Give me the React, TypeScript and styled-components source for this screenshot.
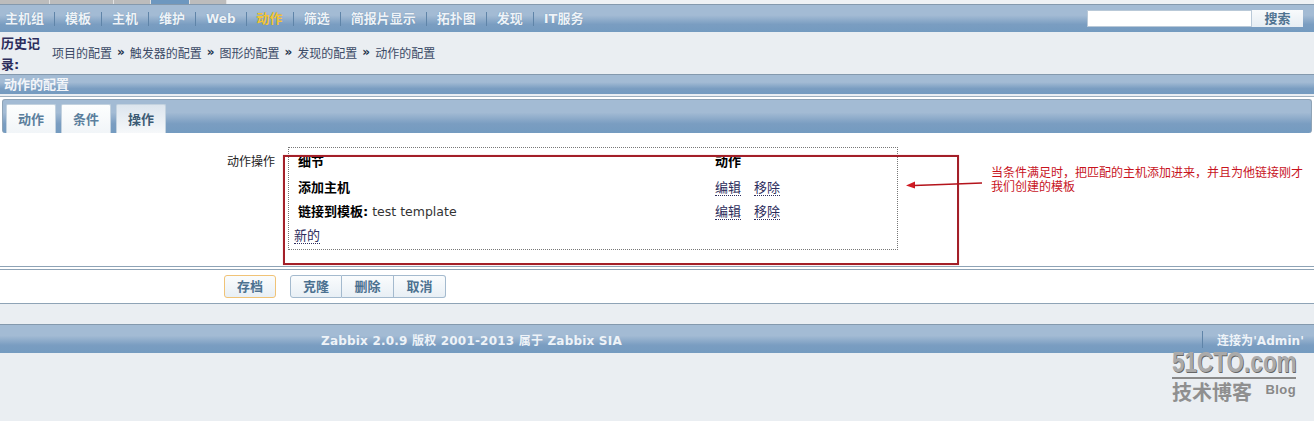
import React from 'react';
import styled, { createGlobalStyle } from 'styled-components';

const CJK = `"DejaVu Sans", "Noto Sans CJK SC", sans-serif`;
const BAR = 'linear-gradient(to bottom, #a3bbd4 0%, #a3bbd4 38%, #7a9dc1 72%, #749bc0 100%)';

const GlobalStyle = createGlobalStyle`
  html, body {
    margin: 0;
    padding: 0;
    background: #eaeef2;
  }
  body {
    font-family: ${CJK};
    font-size: 12px;
    color: #111;
  }
`;

const Page = styled.div`
  position: relative;
  width: 1314px;
  height: 421px;
  overflow: hidden;
`;

const TopStrip = styled.div`
  display: flex;
  height: 4px;
  background: #eef1f4;
`;

const TopTab = styled.div<{ $w: number; $active?: boolean }>`
  width: ${(p) => p.$w}px;
  background: ${(p) => (p.$active ? '#6d97bf' : '#bcbcbc')};
  border-right: 1px solid #e2e2e2;
  box-sizing: border-box;
`;

const NavBar = styled.div`
  display: flex;
  align-items: center;
  justify-content: space-between;
  height: 27px;
  border-top: 1px solid #8499ad;
  background: ${BAR};
`;

const NavList = styled.div`
  display: flex;
  align-items: center;
`;

const NavItem = styled.span<{ $active?: boolean; $small?: boolean }>`
  padding: 0 10px;
  font-size: ${(p) => (p.$small ? 12 : 13)}px;
  font-weight: bold;
  line-height: 14px;
  color: ${(p) => (p.$active ? '#f5c533' : '#eef3f8')};
  text-shadow: 0 0 1px #5f84a8;
  border-right: 1px solid #5f84a8;
  &:first-child {
    padding-left: 5px;
  }
  &:last-child {
    border-right: 0;
  }
`;

const Search = styled.div`
  display: flex;
  margin-right: 11px;
  margin-top: -1px;
`;

const SearchInput = styled.div`
  width: 165px;
  height: 17px;
  background: #fff;
  border: 1px solid #b9c9d8;
  box-sizing: border-box;
`;

const SearchButton = styled.div`
  width: 51px;
  height: 17px;
  background: linear-gradient(to bottom, #f8fafc, #e6edf3);
  color: #4f7391;
  font-size: 13px;
  font-weight: bold;
  line-height: 17px;
  text-align: center;
`;

const History = styled.div`
  display: flex;
  align-items: center;
  height: 42px;
`;

const HistoryLabel = styled.div`
  width: 40px;
  margin-top: 1px;
  margin-right: 12px;
  padding-left: 1px;
  box-sizing: border-box;
  font-size: 13px;
  font-weight: bold;
  line-height: 21px;
  color: #2d2d5c;
`;

const Crumbs = styled.div`
  display: flex;
  align-items: center;
  gap: 5px;
  margin-bottom: 2px;
  font-size: 12px;
  color: #3b4a66;
`;

const CrumbArrow = styled.span`
  font-weight: bold;
  color: #22324a;
`;

const SectionHead = styled.div`
  height: 19px;
  padding-left: 4px;
  border-top: 1px solid #8499ad;
  background: ${BAR};
  color: #f2f5f9;
  font-size: 13px;
  font-weight: bold;
  line-height: 19px;
`;

const Content = styled.div`
  background: #fff;
`;

const Rule = styled.div`
  height: 1px;
  margin: 2px 0;
  background: #9fb0bf;
`;

const TabBar = styled.div`
  display: flex;
  align-items: flex-end;
  gap: 5px;
  box-sizing: border-box;
  height: 34px;
  margin: 0 2px;
  padding-left: 3px;
  border: 1px solid #8ea3b6;
  border-bottom: 0;
  border-radius: 3px 3px 3px 3px;
  background: ${BAR};
`;

const Tab = styled.div<{ $active?: boolean }>`
  width: 50px;
  height: 29px;
  box-sizing: border-box;
  border: 1px solid #c3d2df;
  border-bottom: 0;
  border-radius: 2px 2px 0 0;
  background: ${(p) =>
    p.$active ? 'linear-gradient(to bottom, #dce5ee, #f6f8fa)' : 'linear-gradient(to bottom, #fdfefe, #f1f5f8)'};
  color: ${(p) => (p.$active ? '#3c5a74' : '#5b7f9d')};
  font-size: 13px;
  font-weight: bold;
  line-height: 29px;
  text-align: center;
`;

const FormRow = styled.div`
  display: flex;
  height: 133px;
  padding-top: 14px;
  box-sizing: border-box;
`;

const FormLabel = styled.div`
  width: 275px;
  padding-top: 5px;
  text-align: right;
  font-size: 12px;
  color: #222;
`;

const OpsBox = styled.div`
  width: 610px;
  height: 103px;
  margin-left: 13px;
  box-sizing: border-box;
  border: 1px dotted #777;
  padding-left: 5px;
`;

const OpsRow = styled.div<{ $h: number; $flush?: boolean }>`
  display: flex;
  height: ${(p) => p.$h}px;
  align-items: center;
  padding-left: ${(p) => (p.$flush ? 0 : 4)}px;
`;

const DetailCell = styled.div`
  width: 417px;
  font-size: 12.5px;
  color: #333;
`;

const ActionCell = styled.div`
  display: flex;
  gap: 13px;
  padding-top: 3px;
`;

const Strong = styled.b`
  color: #000;
  font-size: 13px;
`;

const TableLink = styled.a`
  color: #2d2d5c;
  font-size: 13px;
  border-bottom: 1px dotted #2d2d5c;
  line-height: 15px;
`;

const ButtonRow = styled.div`
  display: flex;
  align-items: center;
  height: 33px;
  padding-left: 224px;
  border-top: 1px solid #8ea3b6;
  border-bottom: 1px solid #8ea3b6;
`;

const DoubleRule = styled.div`
  height: 1px;
  margin-bottom: 2px;
  background: #8ea3b6;
`;

const SaveButton = styled.div`
  width: 52px;
  height: 23px;
  margin-right: 14px;
  box-sizing: border-box;
  border: 1px solid #f0c377;
  border-radius: 3px;
  background: linear-gradient(to bottom, #fafcfd, #e8eff5);
  color: #4c7190;
  font-size: 13px;
  font-weight: bold;
  line-height: 21px;
  text-align: center;
`;

const ActionButton = styled.div`
  width: 52px;
  height: 23px;
  box-sizing: border-box;
  border: 1px solid #a4bace;
  border-left-width: 0;
  background: linear-gradient(to bottom, #fafcfd, #e8eff5);
  color: #4c7190;
  font-size: 13px;
  font-weight: bold;
  line-height: 21px;
  text-align: center;
  &:nth-of-type(2) {
    border-left-width: 1px;
    border-radius: 3px 0 0 3px;
  }
  &:last-child {
    border-radius: 0 3px 3px 0;
  }
`;

const Spacer = styled.div`
  height: 20px;
`;

const Footer = styled.div`
  display: flex;
  align-items: center;
  height: 28px;
  border-top: 1px solid #8499ad;
  background: ${BAR};
  color: #eef3f8;
  font-size: 12px;
  font-weight: bold;
`;

const FooterCopy = styled.div`
  margin-left: 321px;
  width: 881px;
  letter-spacing: 0.2px;
`;

const FooterUser = styled.div`
  padding-left: 14px;
  border-left: 1px solid #5f84a8;
  white-space: nowrap;
  letter-spacing: 0.05px;
`;

const RedFrame = styled.div`
  position: absolute;
  left: 283px;
  top: 155px;
  width: 676px;
  height: 110px;
  box-sizing: border-box;
  border: 2px solid #a31f28;
  box-shadow: 0 0 1px #e8a6aa;
  pointer-events: none;
`;

const ArrowSvg = styled.svg`
  position: absolute;
  left: 904px;
  top: 178px;
`;

const Note = styled.div`
  position: absolute;
  left: 991px;
  top: 166px;
  width: 320px;
  color: #c8141e;
  font-size: 12px;
  line-height: 14px;
`;

const Mark = styled.div`
  position: absolute;
  left: 1172px;
  top: 348px;
  width: 124px;
  color: #aaa;
`;

const MarkTitle = styled.div`
  height: 29px;
  border-bottom: 2px solid #8a8a8a;
  font-family: "Liberation Sans", sans-serif;
  font-size: 30px;
  font-weight: bold;
  line-height: 28px;
  white-space: nowrap;
`;

const MarkTitleText = styled.span`
  display: inline-block;
  transform: scaleX(0.75);
  transform-origin: left center;
  text-shadow: 1px 1px 0 #666;
`;

const MarkFoot = styled.div`
  display: flex;
  justify-content: space-between;
  margin-top: 2px;
`;

const MarkCn = styled.span`
  font-size: 20px;
  font-weight: bold;
  line-height: 24px;
  color: #8f8f8f;
`;

const MarkBlog = styled.span`
  margin-top: 1px;
  font-family: "Liberation Sans", sans-serif;
  font-size: 13px;
  font-weight: bold;
  line-height: 16px;
  letter-spacing: 0.4px;
  color: #888;
`;

const navItems = ['主机组', '模板', '主机', '维护', 'Web', '动作', '筛选', '简报片显示', '拓扑图', '发现', 'IT服务'];
const crumbs = ['项目的配置', '触发器的配置', '图形的配置', '发现的配置', '动作的配置'];

function App() {
  return (
    <Page>
      <GlobalStyle />
      <TopStrip>
        <TopTab $w={50} />
        <TopTab $w={64} />
        <TopTab $w={37} />
        <TopTab $w={39} $active />
        <TopTab $w={37} />
      </TopStrip>
      <NavBar>
        <NavList>
          {navItems.map((item) => (
            <NavItem key={item} $active={item === '动作'} $small={item === 'Web'}>
              {item}
            </NavItem>
          ))}
        </NavList>
        <Search>
          <SearchInput />
          <SearchButton>搜索</SearchButton>
        </Search>
      </NavBar>
      <History>
        <HistoryLabel>历史记录:</HistoryLabel>
        <Crumbs>
          {crumbs.map((crumb, i) => (
            <React.Fragment key={crumb}>
              {i > 0 && <CrumbArrow>»</CrumbArrow>}
              <span>{crumb}</span>
            </React.Fragment>
          ))}
        </Crumbs>
      </History>
      <SectionHead>动作的配置</SectionHead>
      <Content>
        <Rule />
        <TabBar>
          <Tab>动作</Tab>
          <Tab>条件</Tab>
          <Tab $active>操作</Tab>
        </TabBar>
        <FormRow>
          <FormLabel>动作操作</FormLabel>
          <OpsBox>
            <OpsRow $h={25}>
              <DetailCell>
                <Strong>细节</Strong>
              </DetailCell>
              <Strong>动作</Strong>
            </OpsRow>
            <OpsRow $h={26}>
              <DetailCell>
                <Strong>添加主机</Strong>
              </DetailCell>
              <ActionCell>
                <TableLink>编辑</TableLink>
                <TableLink>移除</TableLink>
              </ActionCell>
            </OpsRow>
            <OpsRow $h={22}>
              <DetailCell>
                <Strong>链接到模板:</Strong> test template
              </DetailCell>
              <ActionCell>
                <TableLink>编辑</TableLink>
                <TableLink>移除</TableLink>
              </ActionCell>
            </OpsRow>
            <OpsRow $h={27} $flush>
              <ActionCell>
                <TableLink>新的</TableLink>
              </ActionCell>
            </OpsRow>
          </OpsBox>
        </FormRow>
        <DoubleRule />
        <ButtonRow>
          <SaveButton>存档</SaveButton>
          <ActionButton>克隆</ActionButton>
          <ActionButton>删除</ActionButton>
          <ActionButton>取消</ActionButton>
        </ButtonRow>
      </Content>
      <Spacer />
      <Footer>
        <FooterCopy>Zabbix 2.0.9 版权 2001-2013 属于 Zabbix SIA</FooterCopy>
        <FooterUser>连接为'Admin'</FooterUser>
      </Footer>
      <RedFrame />
      <ArrowSvg width="80" height="16" viewBox="0 0 80 16">
        <path d="M2 7.5 L11 3.5 L11 10.5 Z" fill="#d01a22" />
        <path d="M10 7.5 L38 6.5 L78 5" stroke="#b4141c" strokeWidth="1.3" fill="none" />
      </ArrowSvg>
      <Note>
        当条件满足时，把匹配的主机添加进来，并且为他链接刚才
        <br />
        我们创建的模板
      </Note>
      <Mark>
        <MarkTitle>
          <MarkTitleText>51CTO.com</MarkTitleText>
        </MarkTitle>
        <MarkFoot>
          <MarkCn>技术博客</MarkCn>
          <MarkBlog>Blog</MarkBlog>
        </MarkFoot>
      </Mark>
    </Page>
  );
}

export default App;
